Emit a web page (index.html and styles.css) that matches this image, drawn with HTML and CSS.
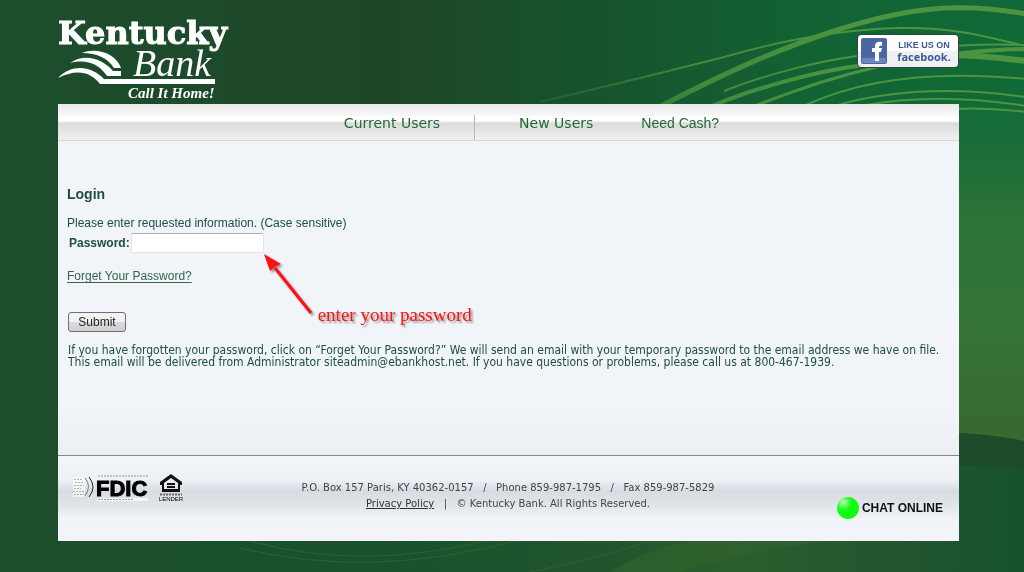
FILE: index.html
```html
<!DOCTYPE html>
<html lang="en">
<head>
    <meta charset="UTF-8">
    <meta name="viewport" content="width=device-width, initial-scale=1.0">
    <title>Kentucky Bank - Login</title>
    <link rel="stylesheet" href="styles.css">
</head>
<body>
    <svg class="backdrop" viewBox="0 0 1024 572" preserveAspectRatio="none" aria-hidden="true">
        <defs>
            <linearGradient id="base" x1="0" y1="0" x2="1" y2="0">
                <stop offset="0" stop-color="#1c4e2d"/>
                <stop offset="0.38" stop-color="#1d4628"/>
                <stop offset="0.55" stop-color="#18512c"/>
                <stop offset="0.8" stop-color="#126334"/>
                <stop offset="1" stop-color="#106a38"/>
            </linearGradient>
            <linearGradient id="side" x1="0" y1="0" x2="0" y2="1">
                <stop offset="0" stop-color="#106a38"/>
                <stop offset="0.35" stop-color="#2b7337"/>
                <stop offset="0.65" stop-color="#357335"/>
                <stop offset="1" stop-color="#38682f"/>
            </linearGradient>
            <linearGradient id="floor" x1="0" y1="0" x2="1" y2="0">
                <stop offset="0" stop-color="#1c4e2d"/>
                <stop offset="0.35" stop-color="#19502d"/>
                <stop offset="0.6" stop-color="#21562d"/>
                <stop offset="0.72" stop-color="#2a5e2d"/>
                <stop offset="0.9" stop-color="#20552e"/>
                <stop offset="1" stop-color="#18522f"/>
            </linearGradient>
            <linearGradient id="fade" gradientUnits="userSpaceOnUse" x1="540" y1="0" x2="860" y2="0">
                <stop offset="0" stop-color="#1a6232"/>
                <stop offset="0.5" stop-color="#3f8a3c"/>
                <stop offset="1" stop-color="#4d9440"/>
            </linearGradient>
        </defs>
        <rect width="1024" height="572" fill="url(#base)"/>
        <rect x="940" y="100" width="84" height="345" fill="url(#side)"/>
        <g fill="none" stroke="url(#fade)">
            <path d="M661 106 C700 86 760 55 834 31 S960 2 1026 14" stroke-width="5"/>
            <path d="M540 102 Q650 76 724 57 C790 38 850 29 900 28 S980 35 1026 46" stroke-width="2"/>
            <path d="M724 91 C770 73 820 61 857 56 S960 42 1026 45" stroke-width="2"/>
            <path d="M712 106 C760 86 820 71 857 66 S980 49 1026 49" stroke-width="4"/>
            <path d="M857 58 Q950 50 1026 61" stroke-width="6"/>
            <path d="M755 106 Q820 80 877 67" stroke-width="3"/>
            <path d="M806 105 Q890 66 1026 79" stroke-width="2"/>
            <path d="M838 105 Q920 82 1026 97" stroke-width="2"/>
            <path d="M866 105 Q940 92 1026 106" stroke-width="2"/>
            <path d="M940 110 Q980 106 1026 112" stroke-width="2"/>
        </g>
        <path d="M0 540 H940 V432 Q990 434 1024 441 V572 H0 Z" fill="url(#floor)"/>
        <path d="M940 432 Q990 434 1024 441 V470 Q980 465 940 464 Z" fill="#1d4c2b"/>
        <path d="M610 572 Q650 548 690 541 H830 Q740 552 680 572 Z" fill="#2f622d" opacity="0.7"/>
        <g fill="none" stroke="#2f622d" stroke-width="1">
            <path d="M250 541 Q360 572 490 540"/>
            <path d="M240 548 Q370 580 520 540"/>
            <path d="M530 572 Q600 558 650 541"/>
        </g>
    </svg>

    <div class="page">
        <header class="header">
            <svg class="logo" viewBox="0 0 174 82" role="img" aria-label="Kentucky Bank, Call It Home!">
                <text class="logo-name" x="0" y="24">Kentucky</text>
                <text class="logo-bank" x="75" y="56">Bank</text>
                <path d="M24 33 C38 27 58 33 63 48 H56 C50 38 38 33 24 33 Z"/>
                <path d="M12 43 C26 33 44 38 55 51 H63 V56 H49 C40 43 28 39 12 43 Z"/>
                <path d="M0 58 C14 43 34 46 46 59 H157 V64 H42 C32 51 18 49 0 58 Z"/>
                <text class="logo-tag" x="70" y="78">Call It Home!</text>
            </svg>
            <a class="facebook" href="#">
                <svg class="facebook-icon" viewBox="0 0 26 26" aria-hidden="true">
                    <rect width="26" height="26" rx="2" fill="#4a67a4"/>
                    <rect x="1" y="20" width="24" height="5" fill="#6c86bb"/>
                    <path d="M14 23 V14 H11 V10 H14 V8 C14 5 16 3 21 4 V8 C19 7 18 8 18 10 H21 L20 14 H18 V23 Z" fill="#fff"/>
                </svg>
                <span class="facebook-text">
                    <span class="facebook-like">LIKE US ON</span>
                    <span class="facebook-name">facebook.</span>
                </span>
            </a>
        </header>

        <nav class="nav">
            <a href="#">Current Users</a>
            <span class="nav-divider"></span>
            <a href="#">New Users</a>
            <a class="nav-cash" href="#">Need Cash?</a>
        </nav>

        <main class="content">
            <h1>Login</h1>
            <form class="login-form">
                <p>Please enter requested information. (Case sensitive)</p>
                <div class="form-row">
                    <label for="password">Password:</label>
                    <div class="field">
                        <input type="password" id="password" name="password">
                        <div class="callout">
                            <svg class="callout-arrow" viewBox="0 0 54 72" aria-hidden="true">
                                <path d="M47 60 L11 15" stroke="#f11" stroke-width="3"/>
                                <path d="M0 1 L17 11 L12 13 L6 18 Z" fill="#f11"/>
                            </svg>
                            <span class="callout-text">enter your password</span>
                        </div>
                    </div>
                </div>
                <a class="forgot" href="#">Forget Your Password?</a>
                <button type="submit" class="submit-btn">Submit</button>
            </form>
            <p class="help">If you have forgotten your password, click on “Forget Your Password?” We will send an email with your temporary password to the email address we have on file. This email will be delivered from Administrator siteadmin@ebankhost.net. If you have questions or problems, please call us at 800-467-1939.</p>
        </main>

        <footer class="footer">
            <div class="badges">
                <svg class="fdic" viewBox="0 0 78 28" role="img" aria-label="FDIC">
                    <rect x="0" y="3" width="12" height="20" fill="#fff" opacity="0.6"/>
                    <g stroke="#999" stroke-dasharray="2 1" opacity="0.7">
                        <path d="M1 5.500 H9 M2 8.500 H10 M1 11.500 H11 M1 14.500 H8 M0 17.500 H11 M1 20.500 H11"/>
                    </g>
                    <path d="M12 4 Q19 12 12 22" fill="none" stroke="#777"/>
                    <path d="M16 3 Q24 13 16 23" fill="none" stroke="#222"/>
                    <rect x="24" y="24" width="51" height="3" fill="#fff" opacity="0.7"/>
                    <path d="M25 2 H75 M25 25.500 H61" stroke="#999" stroke-dasharray="2 1"/>
                    <text x="23" y="22">FDIC</text>
                </svg>
                <svg class="lender" viewBox="0 0 24 28" role="img" aria-label="Equal Housing Lender">
                    <path d="M12 0 L23 8 V11 H21 V18 H3 V11 H1 V8 Z M12 4 L5 9 V15 H19 V9 Z" fill="#111" fill-rule="evenodd"/>
                    <path d="M8 9 H16 V11 H8 Z M8 12 H16 V14 H8 Z" fill="#111"/>
                    <path d="M1 20.500 H23" stroke="#666" stroke-width="2" stroke-dasharray="2 1"/>
                    <text x="12" y="27" text-anchor="middle">LENDER</text>
                </svg>
            </div>
            <div class="address">
                <p>P.O. Box 157 Paris, KY 40362-0157 &nbsp; / &nbsp; Phone 859-987-1795 &nbsp; / &nbsp; Fax 859-987-5829</p>
                <p><a href="#">Privacy Policy</a> &nbsp; | &nbsp; © Kentucky Bank. All Rights Reserved.</p>
            </div>
            <a class="chat" href="#"><span class="chat-dot"></span>CHAT ONLINE</a>
        </footer>
    </div>
</body>
</html>
```
FILE: styles.css
```css
* {
    margin: 0;
    padding: 0;
    box-sizing: border-box;
}

body {
    font-family: 'Liberation Sans', Arial, sans-serif;
    font-size: 12px;
    line-height: 16px;
    color: #1d4f42;
    background: #1c4e2d;
}

/* Green swirl behind the whole page */
.backdrop {
    position: fixed;
    top: 0;
    left: 0;
    width: 100%;
    height: 100%;
    z-index: -1;
}

.page {
    margin: 0 65px 31px 58px;
}

.header {
    display: flex;
    justify-content: space-between;
    align-items: flex-start;
    padding: 20px 0 2px;
}

.logo {
    width: 174px;
    height: 82px;
    fill: #fff;
    overflow: visible;
}

.logo-name {
    font-family: 'DejaVu Serif', serif;
    font-size: 32px;
    font-weight: bold;
    stroke: #fff;
}

.logo-bank {
    font-family: 'Liberation Serif', serif;
    font-size: 38px;
    font-style: italic;
}

.logo-tag {
    font-family: 'Liberation Serif', serif;
    font-size: 15px;
    font-weight: bold;
    font-style: italic;
}

.facebook {
    display: flex;
    align-items: center;
    gap: 6px;
    width: 102px;
    height: 34px;
    margin-top: 14px;
    padding: 0 3px;
    border: 1px solid #33443c;
    border-radius: 4px;
    background: linear-gradient(#fff 50%, #f0f0f2 50%);
    color: #3b5998;
    text-decoration: none;
}

.facebook-icon {
    width: 26px;
    height: 26px;
}

.facebook-text {
    display: flex;
    flex: 1;
    flex-direction: column;
    align-items: center;
    line-height: 12px;
    white-space: nowrap;
}

.facebook-like {
    font-size: 9px;
    font-weight: bold;
}

.facebook-name {
    font-family: 'Open Sans', sans-serif;
    font-size: 11px;
    font-weight: bold;
}

.nav {
    display: flex;
    justify-content: center;
    height: 37px;
    padding-left: 46px;
    border-bottom: 1px solid #d6d8d8;
    background: linear-gradient(#e9e9e9, #f7f7f7 11px, #fff 13px, #fff 17px, #dadada 19px, #e2e2e2 24px, #f0f0f0 36px);
    font-family: 'DejaVu Sans', Verdana, sans-serif;
    font-size: 14px;
    line-height: 38px;
}

.nav a {
    color: #206a38;
    text-decoration: none;
}

.nav-divider {
    width: 1px;
    margin: 11px 44px 0 34px;
    background: #b8b8b8;
}

.nav .nav-cash {
    margin-left: 48px;
    font-family: 'Liberation Sans', Arial, sans-serif;
}

.content {
    min-height: 314px;
    padding: 43px 10px 20px 9px;
    background: linear-gradient(#f1f4f8 85%, #ecf0f4);
}

.content h1 {
    margin-bottom: 11px;
    font-size: 14px;
    line-height: 20px;
}

.login-form {
    display: flex;
    flex-direction: column;
    align-items: flex-start;
}

.form-row {
    display: flex;
    align-items: center;
    gap: 1px;
    margin: 2px 0 15px 2px;
}

.form-row label {
    font-weight: bold;
}

.field {
    position: relative;
}

.field input {
    display: block;
    width: 133px;
    height: 20px;
    padding: 0 4px;
    border: 1px solid #dfe4ea;
    border-top-color: #abadb3;
    border-radius: 2px;
    background: #fff;
    font-size: 12px;
}

/* Hint that hangs off the corner of the password box */
.callout {
    position: absolute;
    top: 100%;
    left: 100%;
    display: flex;
    align-items: flex-end;
    color: #f11;
    pointer-events: none;
}

.callout-arrow {
    width: 54px;
    height: 72px;
    filter: drop-shadow(2px 2px 1px rgba(0, 0, 0, 0.4));
}

.callout-text {
    font-family: 'Liberation Serif', serif;
    font-size: 19px;
    line-height: 20px;
    white-space: nowrap;
    text-shadow: 2px 2px 2px rgba(0, 0, 0, 0.4);
}

.forgot {
    margin-bottom: 28px;
    color: #33664c;
    text-underline-offset: 2px;
}

.submit-btn {
    width: 58px;
    height: 20px;
    margin-left: 1px;
    border: 1px solid #707070;
    border-radius: 3px;
    background: linear-gradient(#f2f2f2 50%, #dcdcdc 50%, #cfcfcf);
    color: #222;
    font-size: 12px;
    line-height: 18px;
}

.help {
    margin: 12px 0 0 1px;
    font-family: 'DejaVu Sans Condensed', 'DejaVu Sans', sans-serif;
    font-size: 12px;
    line-height: 12px;
}

.footer {
    display: grid;
    grid-template-columns: 1fr auto 1fr;
    height: 86px;
    padding: 18px 16px 22px 15px;
    border-top: 1px solid #85898e;
    background: linear-gradient(#f3f6f7, #eef1f4 24px, #dfe4e8 31px, #d6dce1 35px, #dfe4e9 48px, #f0f3f7 62px, #f2f4f8);
}

.badges {
    display: flex;
    gap: 8px;
}

.fdic {
    width: 78px;
    height: 28px;
}

.fdic text {
    font-size: 22px;
    font-weight: bold;
    stroke: #000;
}

.lender {
    width: 24px;
    height: 28px;
}

.lender text {
    font-size: 6px;
}

.address {
    padding-top: 6px;
    color: #444;
    font-family: 'DejaVu Sans', Verdana, sans-serif;
    font-size: 10px;
    text-align: center;
}

.address a {
    color: #333;
}

.chat {
    display: flex;
    align-self: end;
    justify-self: end;
    align-items: center;
    gap: 3px;
    color: #111;
    font-size: 12px;
    font-weight: bold;
    text-decoration: none;
    white-space: nowrap;
}

.chat-dot {
    width: 22px;
    height: 22px;
    border-radius: 50%;
    background: radial-gradient(circle at 30% 25%, #b6ffb6, #1f1 35%, #1f1 75%, #0c0);
}
```
